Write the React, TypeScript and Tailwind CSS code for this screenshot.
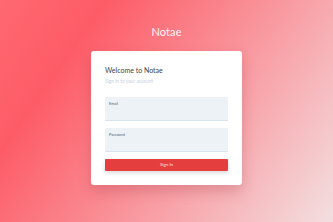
export default function App() {
  return (
    <div className="w-[333px] h-[222px] overflow-hidden flex flex-col items-center bg-[linear-gradient(125deg,#ff6870_0%,#fd5c67_22%,#f9939a_55%,#f3dfe0_100%)] font-['Lato',sans-serif]">
      <h1 className="mt-[23px] h-[17px] text-[11px] leading-[17px] font-normal text-[#fff4f4] tracking-[0.1px]">Notae</h1>
      <div className="mt-[11px] w-[151px] h-[134px] bg-white rounded-[3px] shadow-[0_6px_14px_rgba(150,40,50,0.25)] px-[14px] pt-[14px]">
        <h2 className="text-[7px] leading-[11px] font-normal text-[#3b3f46]">Welcome to Notae</h2>
        <p className="mt-[2px] text-[4.8px] leading-[6px] text-[#c8d0dc]">Sign in to your account</p>
        <div className="mt-[13px] h-[24px] bg-[#edf2f7] border-b border-[#d9e3f0] rounded-[1px] px-[4px] pt-[4px]">
          <span className="block text-[3.8px] leading-[5px] text-[#5a6474]">Email</span>
        </div>
        <div className="mt-[7px] h-[24px] bg-[#edf2f7] border-b border-[#d9e3f0] rounded-[1px] px-[4px] pt-[4px]">
          <span className="block text-[3.8px] leading-[5px] text-[#5a6474]">Password</span>
        </div>
        <button className="block mt-[7px] w-full h-[12px] bg-[#e53e3e] rounded-[1px] shadow-[0_2px_4px_rgba(0,0,0,0.15)] text-[4.5px] leading-[12px] text-[#fde3e3]">Sign In</button>
      </div>
    </div>
  );
}
